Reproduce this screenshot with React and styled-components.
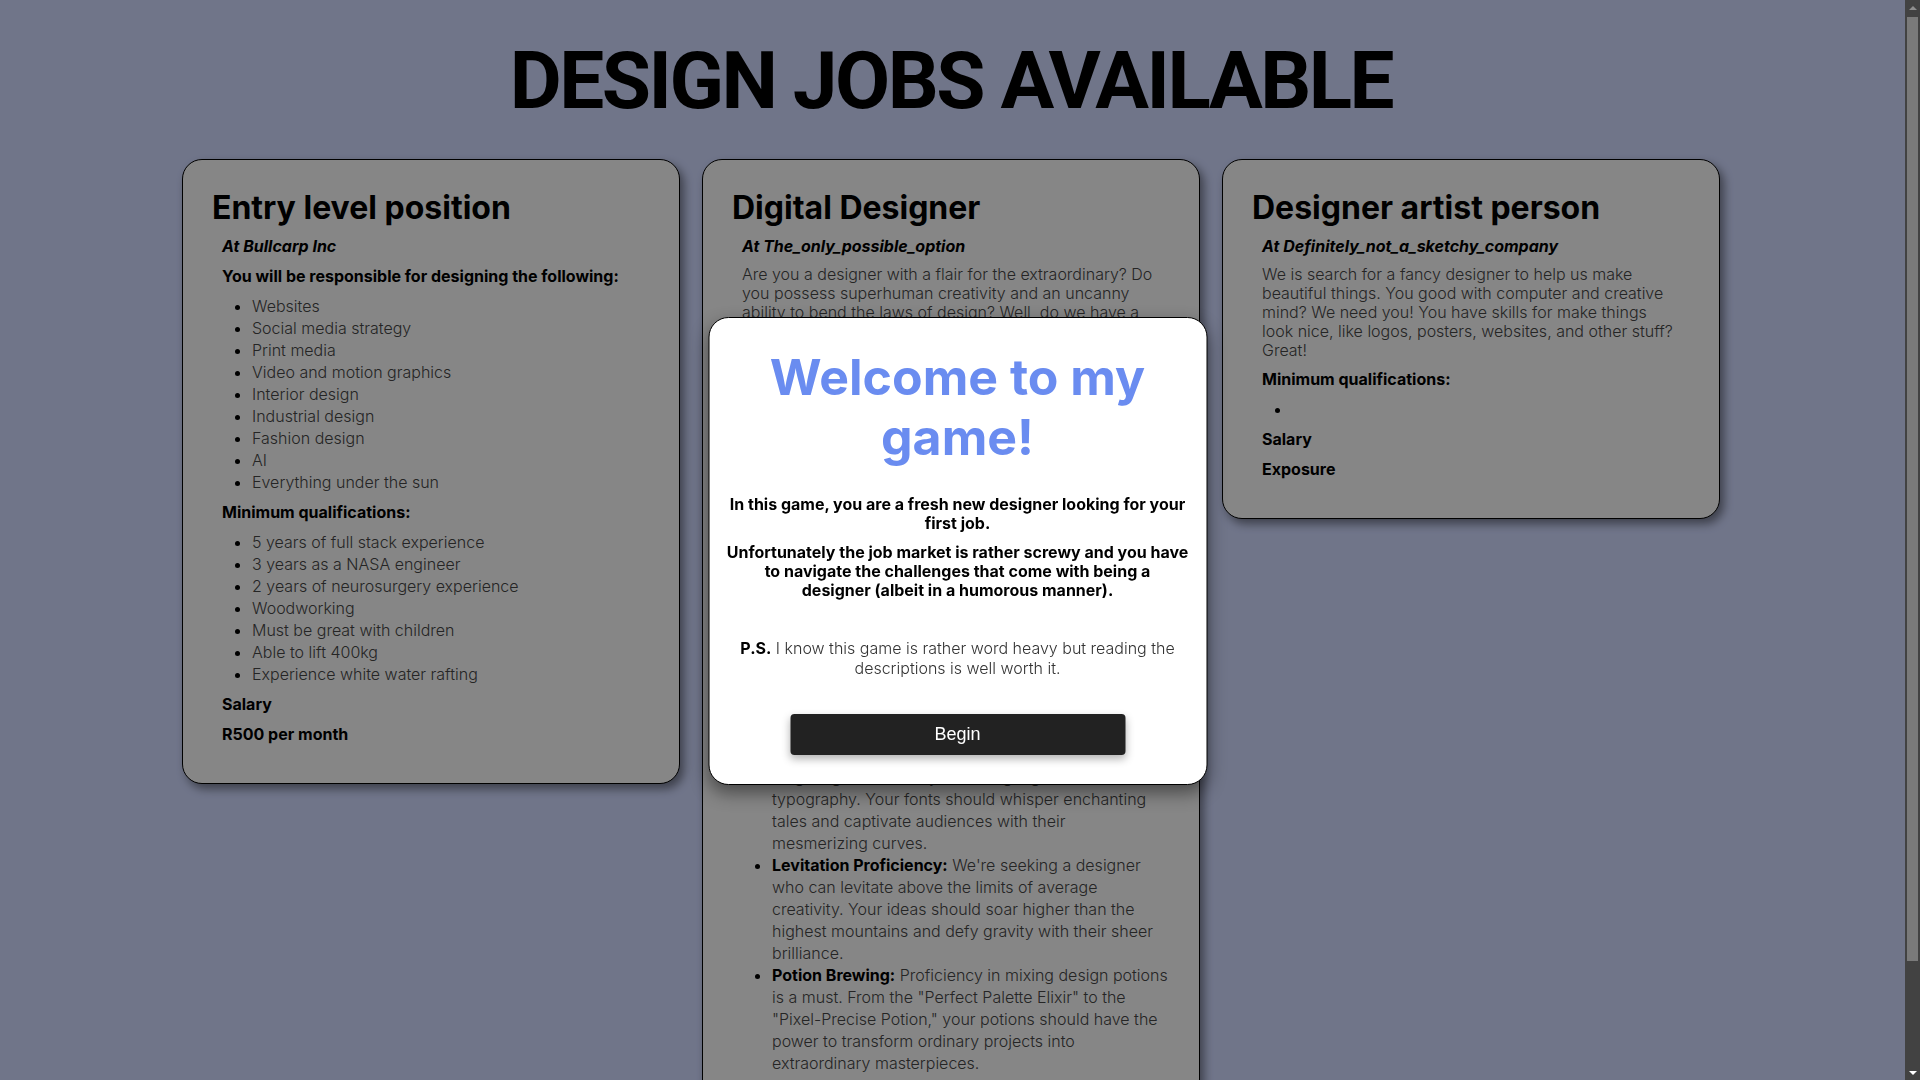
import styled, { createGlobalStyle } from 'styled-components';

const JOBS = [
  {
    id: 'entry',
    title: 'Entry level position',
    company: 'Bullcarp Inc',
    lead: 'You will be responsible for designing the following:',
    duties: [
      'Websites',
      'Social media strategy',
      'Print media',
      'Video and motion graphics',
      'Interior design',
      'Industrial design',
      'Fashion design',
      'AI',
      'Everything under the sun',
    ],
    qualifications: [
      '5 years of full stack experience',
      '3 years as a NASA engineer',
      '2 years of neurosurgery experience',
      'Woodworking',
      'Must be great with children',
      'Able to lift 400kg',
      'Experience white water rafting',
    ],
    salary: 'R500 per month',
  },
  {
    id: 'digital',
    title: 'Digital Designer',
    company: 'The_only_possible_option',
    description:
      "Are you a designer with a flair for the extraordinary? Do you possess superhuman creativity and an uncanny ability to bend the laws of design? Well, do we have a job for you! We're looking for a Digital Designer who can turn the impossible into reality, one pixel at a time. If you can think outside the box, inside the box and all around the box, we want to hear from you.",
    qualifications: [
      {
        term: 'Telepathic Design Skills:',
        lines: [
          "You must be able to read our clients' minds and deliver exactly what they want before they even know they want it. Meetings are optional.",
        ],
      },
      {
        term: 'Time Manipulation:',
        lines: [
          'Deadlines are mere suggestions to you. You should be able to bend time and deliver projects yesterday, while still making it home for dinner.',
        ],
      },
      {
        term: 'Colour Whispering:',
        lines: [
          'Colours should speak to you and obey your every command. You must know the secret name of every shade in existence.',
        ],
      },
      {
        term: 'Shape-shifting Layouts:',
        lines: [
          'Your designs should adapt effortlessly to any screen, surface or dimension, including the ones science has not discovered yet.',
        ],
      },
      {
        term: 'Enchanted Typography:',
        lines: [
          'You must be fluent in the long-forgotten and mystical language of',
          'typography. Your fonts should whisper enchanting tales and captivate audiences with their',
          'mesmerizing curves.',
        ],
      },
      {
        term: 'Levitation Proficiency:',
        lines: [
          "We're seeking a designer who can levitate above the limits of average creativity. Your ideas should soar higher than the highest mountains and defy gravity with their sheer brilliance.",
        ],
      },
      {
        term: 'Potion Brewing:',
        lines: [
          'Proficiency in mixing design potions is a must. From the "Perfect Palette Elixir" to the "Pixel-Precise Potion," your potions should have the power to transform ordinary projects into extraordinary masterpieces.',
        ],
      },
    ],
    salary: 'Paid in pixie dust',
  },
  {
    id: 'artist',
    title: 'Designer artist person',
    company: 'Definitely_not_a_sketchy_company',
    description:
      'We is search for a fancy designer to help us make beautiful things. You good with computer and creative mind? We need you! You have skills for make things look nice, like logos, posters, websites, and other stuff? Great!',
    qualifications: [''],
    salary: 'Exposure',
  },
];

const GlobalStyle = createGlobalStyle`
  * {
    box-sizing: border-box;
  }

  body {
    margin: 0;
    padding-right: 15px;
    background: #ccd5fa;
    color: #444444;
    font-family: Inter, 'Liberation Sans', sans-serif;
  }
`;

function Qualification({ item }) {
  if (typeof item === 'string') return <li>{item || '\u00a0'}</li>;
  return (
    <li>
      <strong>{item.term}</strong>{' '}
      {item.lines.map((line, i) => (
        <span key={i}>
          {i > 0 && <br />}
          {line}
        </span>
      ))}
    </li>
  );
}

function JobCard({ job }) {
  return (
    <Card>
      <CardTitle>{job.title}</CardTitle>
      <CardBody>
        <Company>At {job.company}</Company>
        {job.lead && <Label>{job.lead}</Label>}
        {job.duties && (
          <List>
            {job.duties.map((duty) => (
              <li key={duty}>{duty}</li>
            ))}
          </List>
        )}
        {job.description && <Description>{job.description}</Description>}
        <Label>Minimum qualifications:</Label>
        <List>
          {job.qualifications.map((item, i) => (
            <Qualification key={i} item={item} />
          ))}
        </List>
        <Label>Salary</Label>
        <Label>{job.salary}</Label>
      </CardBody>
    </Card>
  );
}

export default function App() {
  return (
    <>
      <GlobalStyle />
      <Page>
        <Heading>DESIGN JOBS AVAILABLE</Heading>
        <CardRow>
          {JOBS.map((job) => (
            <JobCard key={job.id} job={job} />
          ))}
        </CardRow>
      </Page>

      <Backdrop />
      <Modal>
        <WelcomeTitle>Welcome to my game!</WelcomeTitle>
        <IntroText>
          In this game, you are a fresh new designer looking for your first
          job.
        </IntroText>
        <IntroText $gap={10}>
          Unfortunately the job market is rather screwy and you have to
          navigate the challenges that come with being a<br />
          designer (albeit in a humorous manner).
        </IntroText>
        <Note>
          <strong>P.S.</strong> I know this game is rather word heavy but
          reading the descriptions is well worth it.
        </Note>
        <BeginButton type="button">Begin</BeginButton>
      </Modal>

      <ScrollRail>
        <ScrollArrow $dir="up" />
        <ScrollThumb />
        <ScrollArrow $dir="down" />
      </ScrollRail>
    </>
  );
}

const Page = styled.main`
  padding: 41px 3px 25px 0;
`;

const Heading = styled.h1`
  margin: 0 0 38px;
  text-align: center;
  font-family: Roboto, 'Liberation Sans', sans-serif;
  font-size: 80px;
  line-height: 80px;
  font-weight: 700;
  letter-spacing: -2.5px;
  color: #000000;
`;

const CardRow = styled.div`
  display: flex;
  justify-content: center;
  align-items: flex-start;
  gap: 22px;
`;

const Card = styled.section`
  width: 498px;
  padding: 29px 30px 38px;
  background: #f5f5f5;
  border: 1px solid #000000;
  border-radius: 20px;
  box-shadow: 4px 5px 10px rgba(0, 0, 0, 0.45);
`;

const CardTitle = styled.h2`
  margin: 0 0 0 -1px;
  font-size: 32px;
  line-height: 38px;
  font-weight: 700;
  color: #000000;
`;

const CardBody = styled.div`
  padding-left: 9px;
  font-size: 16px;
  line-height: 22px;
  font-weight: 300;

  & > * {
    margin: 8px 0 0;
  }
`;

const Company = styled.p`
  font-weight: 700;
  font-style: italic;
  color: #000000;
`;

const Label = styled.p`
  font-weight: 700;
  color: #000000;
`;

const Description = styled.p`
  padding-right: 14px;
  line-height: 19px;
`;

const List = styled.ul`
  && {
    margin-bottom: 1px;
  }
  padding-left: 30px;

  li::marker {
    color: #000000;
  }

  strong {
    font-weight: 700;
    color: #000000;
  }
`;

const Backdrop = styled.div`
  position: fixed;
  inset: 0 15px 0 0;
  background: rgba(0, 0, 0, 0.45);
`;

const Modal = styled.div`
  position: fixed;
  top: 317px;
  left: calc(50% - 2.5px);
  width: 499px;
  transform: translateX(-50%);
  padding: 29px 16px;
  background: #ffffff;
  border: 1px solid #000000;
  border-radius: 20px;
  box-shadow: 0 8px 18px rgba(0, 0, 0, 0.45);
  text-align: center;
  color: #000000;
`;

const WelcomeTitle = styled.h2`
  margin: 0;
  font-size: 50px;
  line-height: 60px;
  font-weight: 700;
  color: #6a8cf0;
`;

const IntroText = styled.p`
  margin: ${({ $gap }) => $gap ?? 28}px 0 0;
  font-size: 16px;
  line-height: 19px;
  font-weight: 700;
`;

const Note = styled.p`
  margin: 38px 0 0;
  font-size: 16px;
  line-height: 20px;
  font-weight: 300;
  color: #333333;

  strong {
    font-weight: 700;
    color: #000000;
  }
`;

const BeginButton = styled.button`
  display: block;
  width: 335px;
  height: 41px;
  margin: 36px auto 0;
  border: none;
  border-radius: 4px;
  background: #222222;
  color: #ffffff;
  font-family: 'Liberation Sans', Arial, sans-serif;
  font-size: 18px;
  cursor: pointer;
  box-shadow: 0 4px 8px rgba(0, 0, 0, 0.3);
`;

const ScrollRail = styled.div`
  position: fixed;
  top: 0;
  right: 0;
  bottom: 0;
  width: 15px;
  display: flex;
  flex-direction: column;
  align-items: center;
  background: #424242;
`;

const ScrollArrow = styled.div`
  flex: none;
  width: 15px;
  height: 15px;
  display: flex;
  align-items: center;
  justify-content: center;

  &::before {
    content: '';
    border-left: 4px solid transparent;
    border-right: 4px solid transparent;
    ${({ $dir }) =>
      $dir === 'up'
        ? 'border-bottom: 4px solid #8e8e8e;'
        : 'border-top: 4px solid #ffffff;'}
  }
`;

const ScrollThumb = styled.div`
  flex: none;
  width: 11px;
  height: 944px;
  margin: 2px 0 auto;
  background: #7a7a7a;
`;
